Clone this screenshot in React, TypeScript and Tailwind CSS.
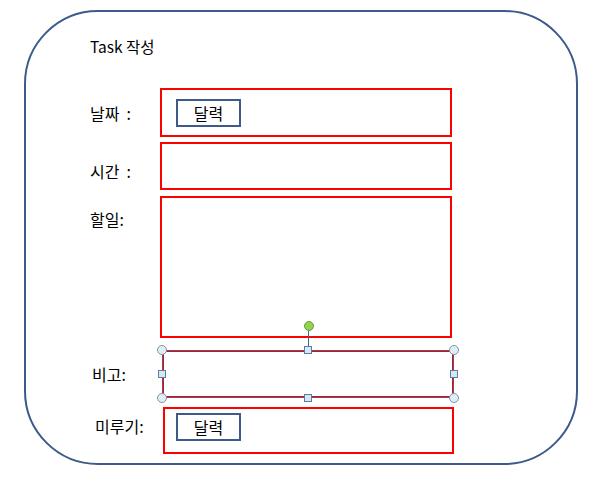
const font = "font-['Malgun_Gothic','Noto_Sans_CJK_KR','Noto_Sans',sans-serif]";

const CalendarButton = ({ className }: { className: string }) => (
  <div
    className={`w-[65px] h-[28px] border-2 border-[#3c5b8a] flex items-center justify-center text-[16px] leading-none text-black ${className}`}
  >
    달력
  </div>
);

const Circle = ({ pos }: { pos: string }) => (
  <span
    className={`absolute w-[10px] h-[10px] rounded-full border border-[#8494a4] bg-[#dfeef4] ${pos}`}
  />
);

const Square = ({ pos }: { pos: string }) => (
  <span
    className={`absolute w-[8px] h-[8px] border border-[#5b7ca3] bg-[#d6e7f3] ${pos}`}
  />
);

export default function App() {
  return (
    <div className={`w-[610px] h-[489px] bg-white pt-[10px] pl-[24px] text-black ${font}`}>
      <div className="w-[554px] h-[455px] border-2 border-[#3c5b8a] rounded-[74px] pl-[64px] pt-[24px]">
        {/* Title */}
        <div className="h-[20px] leading-[20px] text-[15.5px]">Task 작성</div>

        {/* 날짜 */}
        <div className="flex items-center mt-[32px]">
          <div className="w-[70px] text-[16px] leading-[24px] whitespace-pre">날짜  :</div>
          <div className="w-[292px] h-[49px] border-2 border-[#ff0000] pl-[14px] pt-[9px]">
            <CalendarButton className="" />
          </div>
        </div>

        {/* 시간 */}
        <div className="flex items-start mt-[5px]">
          <div className="w-[70px] text-[16px] leading-[24px] mt-[17px] whitespace-pre">시간  :</div>
          <div className="w-[292px] h-[48px] border-2 border-[#ff0000]" />
        </div>

        {/* 할일 */}
        <div className="flex items-start mt-[6px]">
          <div className="w-[70px] text-[16px] leading-[24px] mt-[11px]">할일:</div>
          <div className="w-[292px] h-[142px] border-2 border-[#ff0000]" />
        </div>

        {/* 비고 (selected shape) */}
        <div className="flex items-center mt-[12px] ml-[2px]">
          <div className="w-[70px] text-[16px] leading-[24px]">비고:</div>
          <div className="relative w-[292px] h-[48px] border border-[#44618a] shadow-[inset_0_0_0_1px_#ff0000]">
            <span className="absolute left-[145px] -top-[21px] w-px h-[21px] bg-[#44618a]" />
            <span className="absolute left-[141px] -top-[30px] w-[10px] h-[10px] rounded-full border border-[#6c9a45] bg-[#8fd44c]" />
            <Circle pos="-left-[6px] -top-[6px]" />
            <Circle pos="-right-[6px] -top-[6px]" />
            <Circle pos="-left-[6px] -bottom-[6px]" />
            <Circle pos="-right-[6px] -bottom-[6px]" />
            <Square pos="left-[141px] -top-[5px]" />
            <Square pos="left-[141px] -bottom-[5px]" />
            <Square pos="-left-[5px] top-[19px]" />
            <Square pos="-right-[5px] top-[19px]" />
          </div>
        </div>

        {/* 미루기 */}
        <div className="flex items-start mt-[9px] ml-[3px]">
          <div className="w-[70px] pl-[2px] text-[16px] leading-[24px] mt-[7px]">미루기:</div>
          <div className="w-[291px] h-[47px] border-2 border-[#ff0000] pl-[11px] pt-[4px]">
            <CalendarButton className="" />
          </div>
        </div>
      </div>
    </div>
  );
}
